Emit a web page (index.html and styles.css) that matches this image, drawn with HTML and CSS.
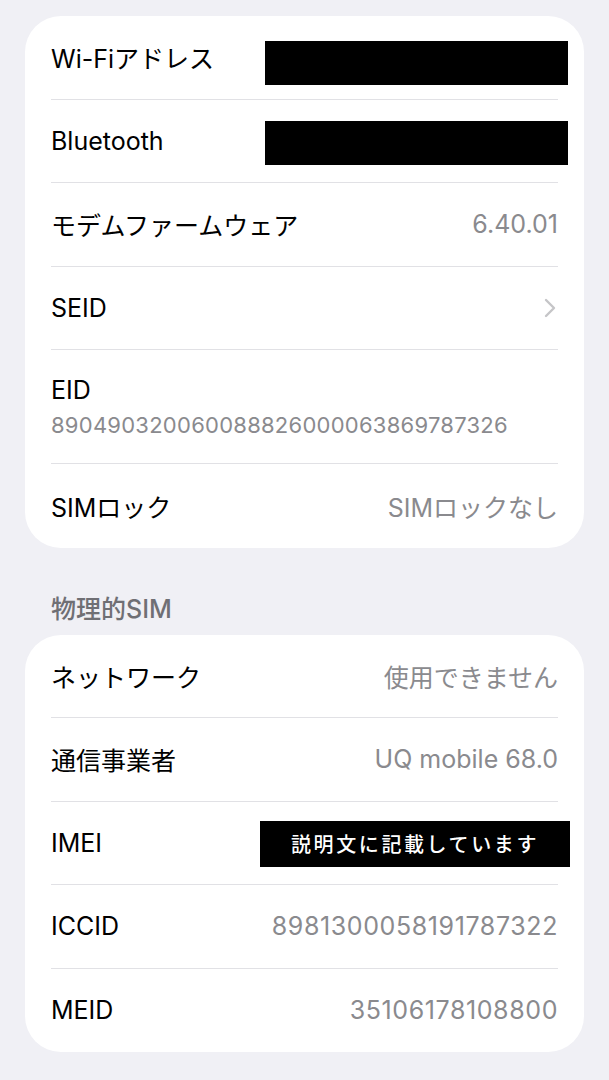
FILE: index.html
```html
<!DOCTYPE html>
<html lang="ja">
<head>
  <meta charset="UTF-8">
  <title>情報</title>
  <meta name="viewport" content="width=device-width, initial-scale=1.0">
  <link rel="stylesheet" href="styles.css">
</head>
<body>
  <div class="page">
    <div class="group">
      <div class="row">
        <span class="label">Wi-Fiアドレス</span>
        <span class="redact redact-top"></span>
      </div>
      <div class="row">
        <span class="label">Bluetooth</span>
        <span class="redact"></span>
      </div>
      <div class="row">
        <span class="label">モデムファームウェア</span>
        <span class="value">6.40.01</span>
      </div>
      <div class="row">
        <span class="label">SEID</span>
        <svg class="chevron" width="12" height="20" viewBox="0 0 12 20">
          <path d="M2 2 L10 10 L2 18" fill="none" stroke="#c5c5c8" stroke-width="2.4" stroke-linecap="round" stroke-linejoin="round"/>
        </svg>
      </div>
      <div class="row row-tall">
        <span class="label">EID</span>
        <span class="subvalue">890490320060088826000063869787326</span>
      </div>
      <div class="row">
        <span class="label">SIMロック</span>
        <span class="value">SIMロックなし</span>
      </div>
    </div>

    <div class="section-title">物理的SIM</div>

    <div class="group">
      <div class="row">
        <span class="label">ネットワーク</span>
        <span class="value">使用できません</span>
      </div>
      <div class="row">
        <span class="label">通信事業者</span>
        <span class="value">UQ mobile 68.0</span>
      </div>
      <div class="row">
        <span class="label">IMEI</span>
        <span class="redact redact-note">説明文に記載しています</span>
      </div>
      <div class="row">
        <span class="label">ICCID</span>
        <span class="value num">8981300058191787322</span>
      </div>
      <div class="row">
        <span class="label">MEID</span>
        <span class="value num">35106178108800</span>
      </div>
    </div>
  </div>
</body>
</html>
```

FILE: styles.css
```css
:root {
  --bg: #f0f0f5;
  --card: #ffffff;
  --sep: #e1e1e5;
  --text: #000000;
  --muted: #8a8a8e;
  --header: #6f6f74;
}
html, body {
  margin: 0;
  padding: 0;
  background: var(--bg);
  font-family: 'Inter', 'Noto Sans CJK JP', sans-serif;
  color: var(--text);
}
.page {
  padding: 16px 25px 30px;
}
.group {
  background: var(--card);
  border-radius: 36px;
  padding: 0 26px;
}
.row {
  display: flex;
  align-items: center;
  justify-content: space-between;
  height: 83.5px;
  box-sizing: border-box;
  border-bottom: 1px solid var(--sep);
}
.row:last-child {
  border-bottom: none;
}
.label {
  font-size: 25px;
  white-space: nowrap;
}
.value {
  font-size: 25px;
  color: var(--muted);
  white-space: nowrap;
}
.num {
  letter-spacing: 0.6px;
}
.row-tall {
  height: 114px;
  flex-direction: column;
  align-items: flex-start;
  justify-content: center;
  gap: 7px;
}
.subvalue {
  font-size: 22px;
  color: var(--muted);
  letter-spacing: 0.25px;
}
.chevron {
  margin-right: 2px;
}
.section-title {
  font-size: 25px;
  line-height: 30px;
  font-weight: 500;
  color: var(--header);
  padding: 46px 26px 11px;
}
.redact {
  background: #000;
  width: 303px;
  height: 44px;
  margin-right: -10px;
  margin-top: 4px;
}
.redact-top {
  margin-top: 12px;
}
.redact-note {
  width: 310px;
  height: 46px;
  margin-right: -12px;
  margin-top: 2px;
  color: #fff;
  font-size: 20px;
  font-weight: 500;
  letter-spacing: 2.6px;
  display: flex;
  align-items: center;
  justify-content: center;
}
```
